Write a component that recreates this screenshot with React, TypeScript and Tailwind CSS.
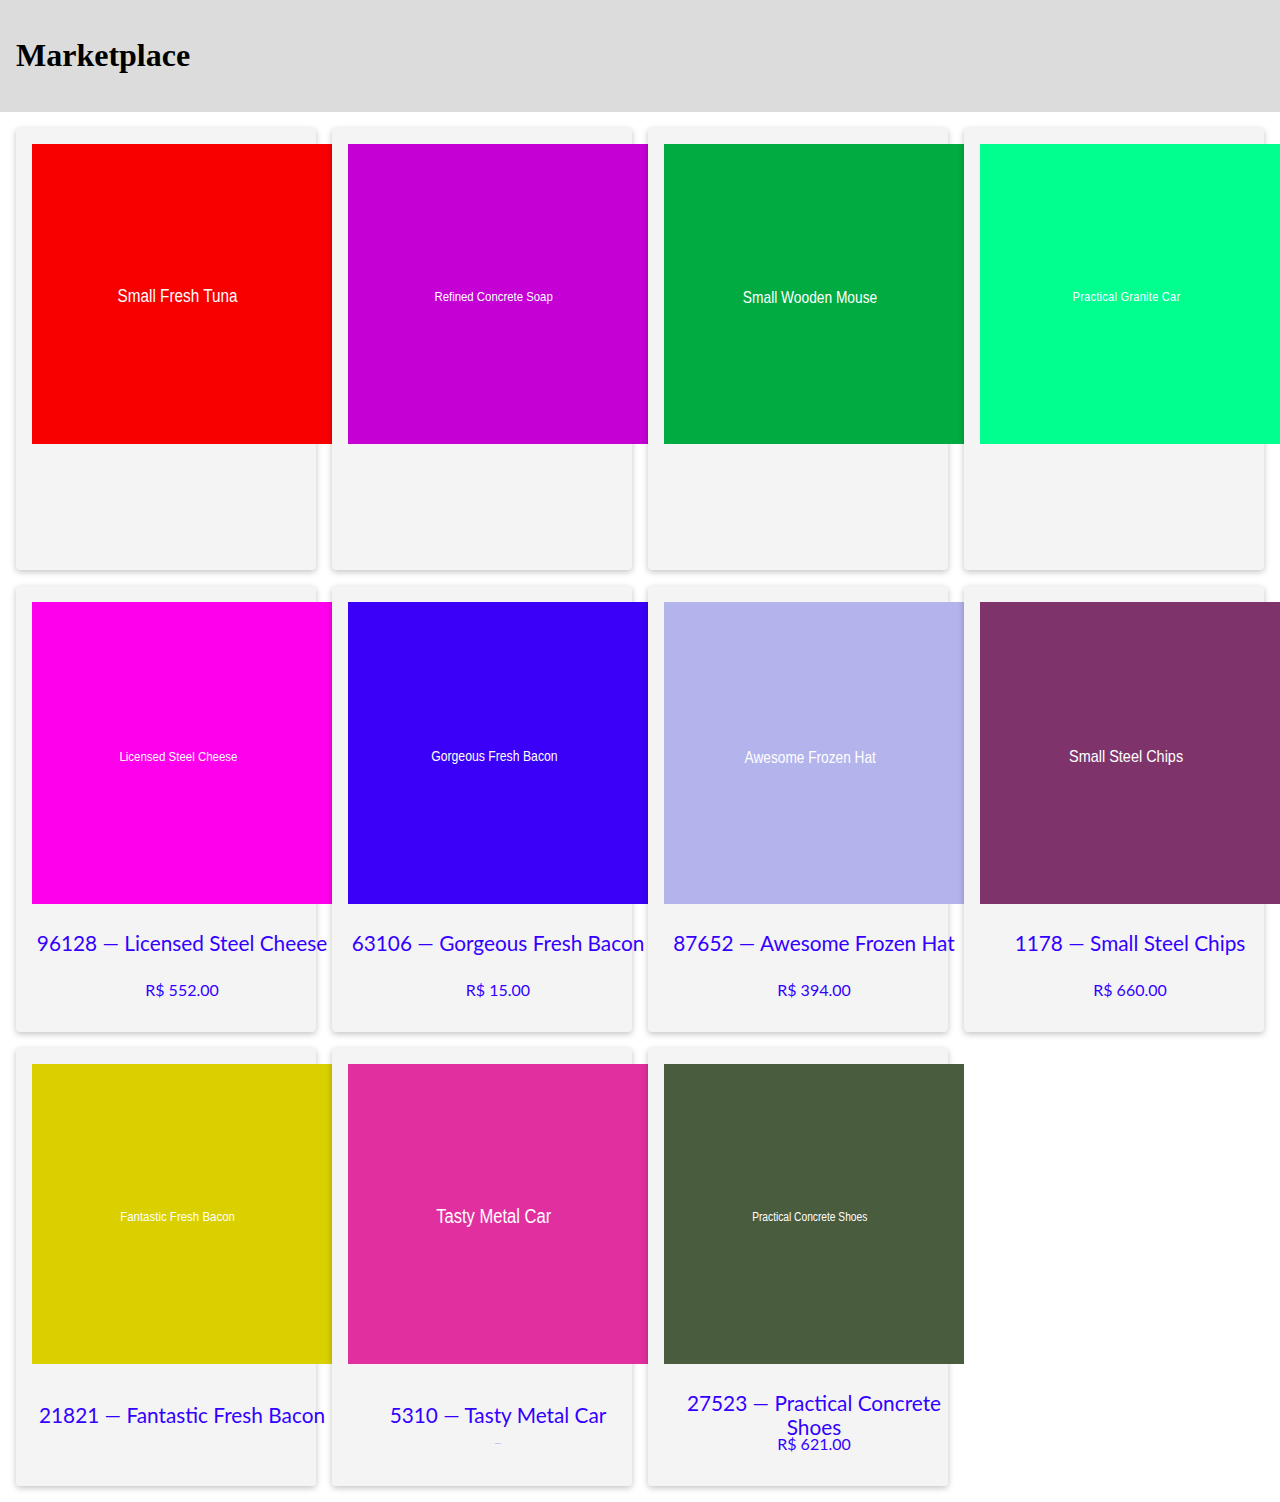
import React from "react";

type Product = {
  name: string;
  code?: string;
  price?: string;
  bg: string;
  label: string;
};

type Row = {
  card: string;
  image: string;
  title: string;
  price: string;
  items: Product[];
};

const ROWS: Row[] = [
  {
    card: "h-[442px]",
    image: "h-[300px] pt-[6px]",
    title: "",
    price: "",
    items: [
      { name: "Small Fresh Tuna", bg: "bg-[#f80000]", label: "text-[18px]" },
      { name: "Refined Concrete Soap", bg: "bg-[#c400d4]", label: "text-[13.4px]" },
      { name: "Small Wooden Mouse", bg: "bg-[#00ac41]", label: "text-[16.2px]" },
      { name: "Practical Granite Car", bg: "bg-[#00ff8f]", label: "text-[13px] tracking-[0.3px]" },
    ],
  },
  {
    card: "h-[446px]",
    image: "h-[302px] pt-[8px]",
    title: "mt-[15px]",
    price: "mt-[11px]",
    items: [
      { name: "Licensed Steel Cheese", code: "96128", price: "R$ 552.00", bg: "bg-[#ff00ec]", label: "text-[13.5px]" },
      { name: "Gorgeous Fresh Bacon", code: "63106", price: "R$ 15.00", bg: "bg-[#3a00f8]", label: "text-[14.4px]" },
      { name: "Awesome Frozen Hat", code: "87652", price: "R$ 394.00", bg: "bg-[#b4b4ec]", label: "text-[16.1px]" },
      { name: "Small Steel Chips", code: "1178", price: "R$ 660.00", bg: "bg-[#7e346b]", label: "text-[17px]" },
    ],
  },
  {
    card: "h-[438px]",
    image: "h-[300px] pt-[6px]",
    title: "mt-[27px]",
    price: "-mt-[7px]",
    items: [
      { name: "Fantastic Fresh Bacon", code: "21821", bg: "bg-[#dad000]", label: "text-[13.5px]" },
      { name: "Tasty Metal Car", code: "5310", price: "tiny", bg: "bg-[#e12f9f]", label: "text-[19.5px]" },
      { name: "Practical Concrete Shoes", code: "27523", price: "R$ 621.00", bg: "bg-[#4a5c3e]", label: "text-[12px]" },
    ],
  },
];

// no narrow face installed, so squeeze Liberation Sans instead
const NARROW = "font-['Liberation_Sans',Arial,sans-serif]";
const TEXT = "font-['Lato','Noto_Sans',sans-serif]";

function Card({ p, row }: { p: Product; row: Row }) {
  return (
    <div className={`flex w-[300px] shrink-0 flex-col items-start rounded-sm bg-[#f4f4f4] p-4 shadow-[0_2px_6px_rgba(0,0,0,0.24)] ${row.card}`}>
      <div className={`flex w-[300px] shrink-0 items-center justify-center pr-2 text-white ${p.bg} ${row.image}`}>
        <span className={`inline-block scale-x-[0.85] whitespace-nowrap ${NARROW} ${p.label}`}>{p.name}</span>
      </div>
      {p.code && (
        <div className={`flex h-12 w-[300px] shrink-0 items-center justify-center text-center text-[20.8px] leading-6 text-[#3300ff] ${TEXT} ${row.title}`}>
          <span>
            {p.code} — {p.name}
          </span>
        </div>
      )}
      {p.price === "tiny" ? (
        <div className={`flex h-6 w-[300px] items-center justify-center ${row.price}`}>
          <span className="h-px w-1.5 bg-[#c8c0ff]" />
        </div>
      ) : p.price ? (
        <div className={`w-[300px] text-center text-[16px] leading-6 text-[#3300ff] ${TEXT} ${row.price}`}>{p.price}</div>
      ) : null}
    </div>
  );
}

export default function App() {
  return (
    <div className="min-h-[1502px] bg-white">
      <header className="bg-[#dcdcdc] p-4">
        <h1 className="my-[21.44px] font-['Liberation_Serif','Times_New_Roman',serif] text-[32px] font-bold leading-[normal] text-black">
          Marketplace
        </h1>
      </header>
      <main className="flex flex-col gap-4 p-4">
        {ROWS.map((row, i) => (
          <div key={i} className="flex gap-4">
            {row.items.map((p) => (
              <Card key={p.name} p={p} row={row} />
            ))}
          </div>
        ))}
      </main>
    </div>
  );
}
